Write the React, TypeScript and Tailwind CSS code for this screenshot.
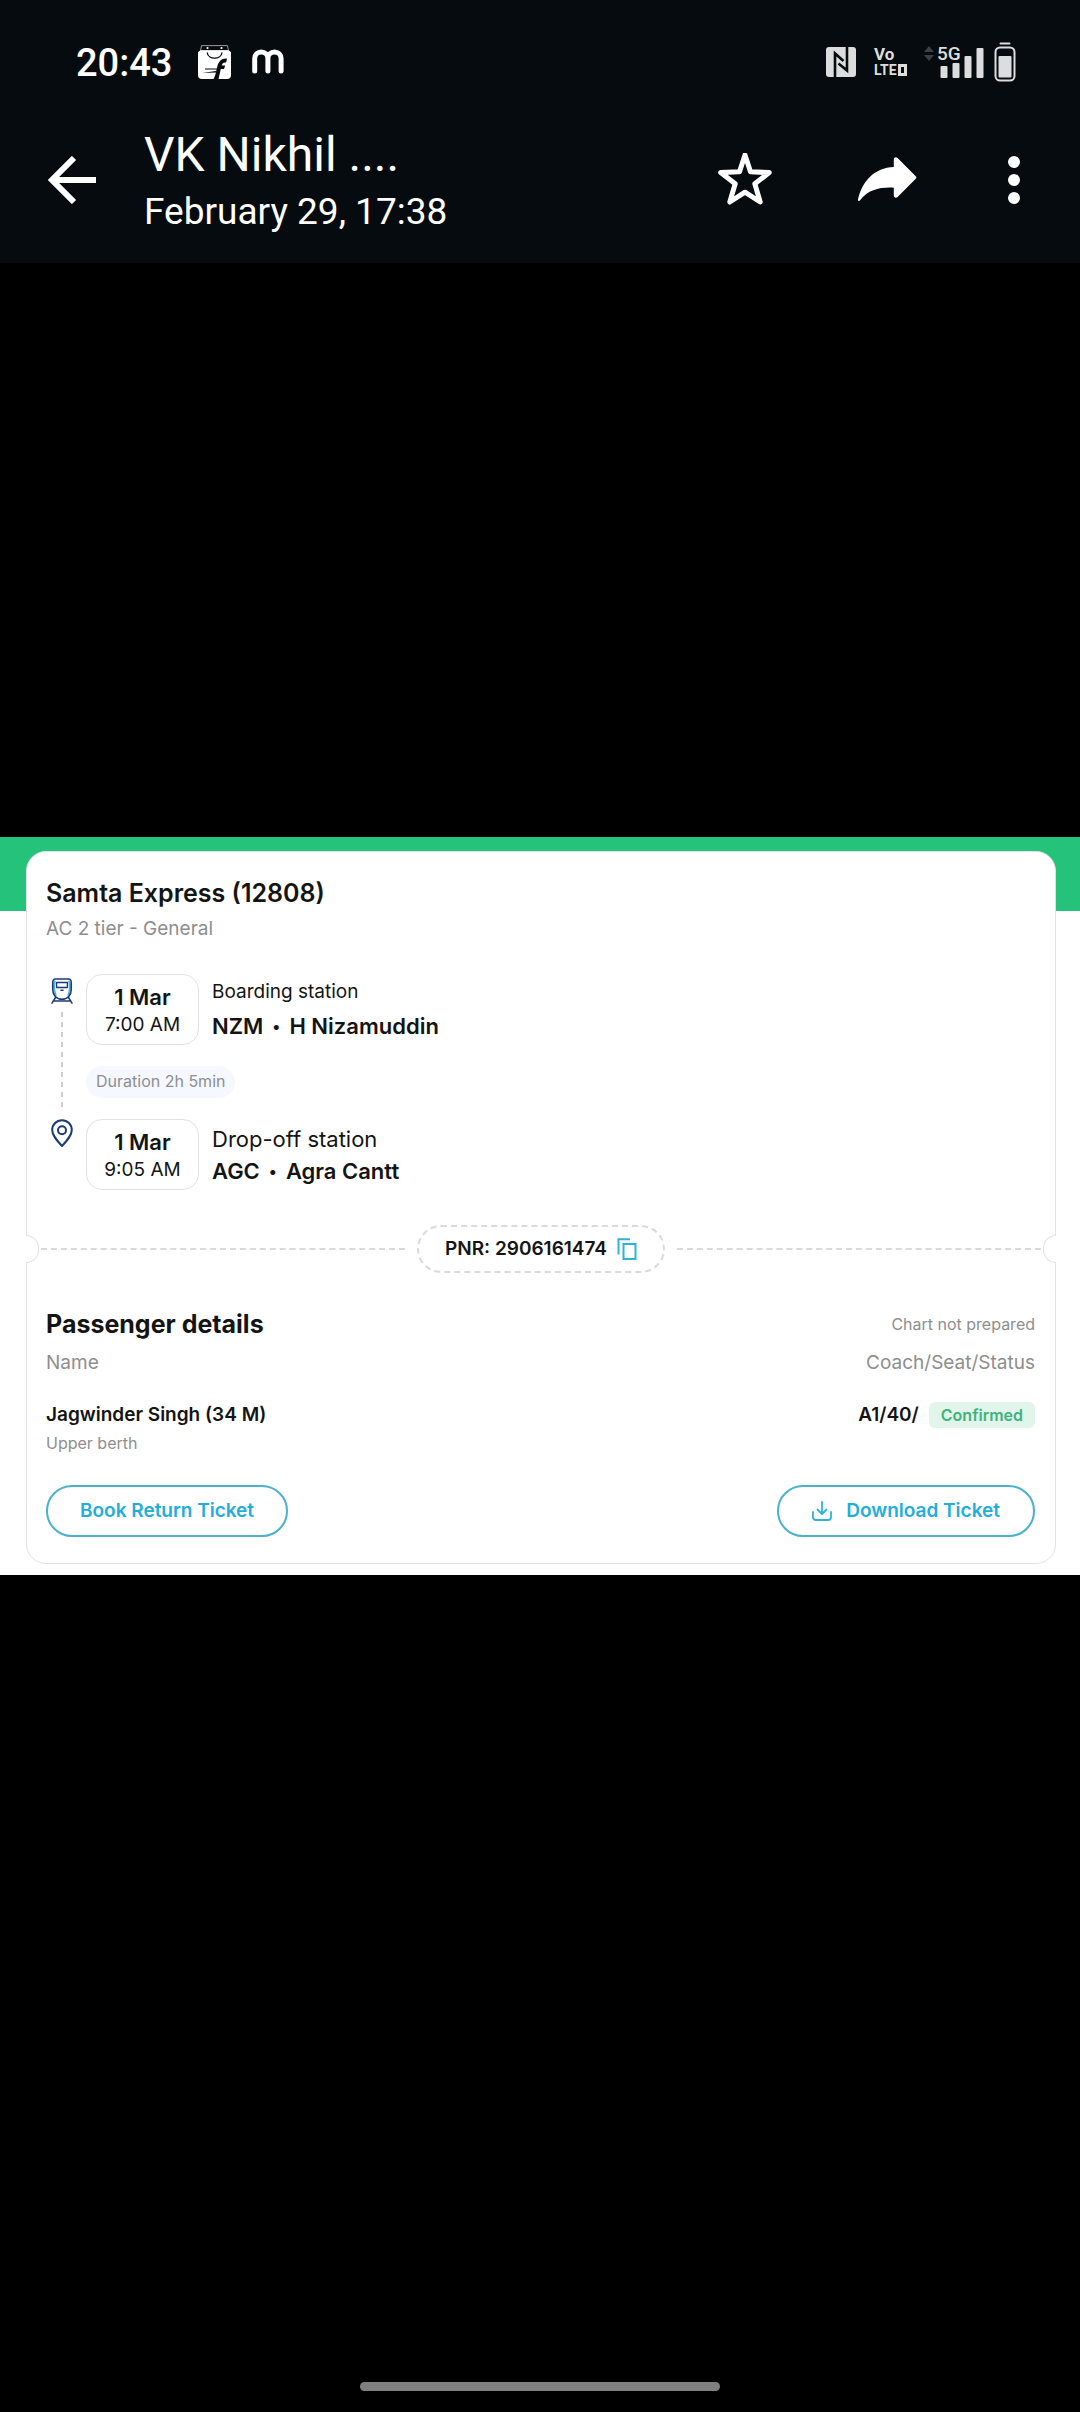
import React from 'react';

const PASSENGERS = [
  { name: 'Jagwinder Singh (34 M)', berth: 'Upper berth', seat: 'A1/40/', status: 'Confirmed' },
];

const BagIcon = () => (
  <svg className="w-[34px] h-[34px]" viewBox="0 0 34 34" fill="none">
    <path d="M3.500.6h26l1 5H2.500z" stroke="#9a9c9e" strokeWidth="1" />
    <path d="M0 7 2.500 5.300h28L33 7v23a4 4 0 0 1-4 4H4a4 4 0 0 1-4-4z" fill="#fff" />
    <circle cx="9.500" cy="3" r="1.100" fill="#fff" />
    <circle cx="23.500" cy="3" r="1.100" fill="#fff" />
    <path d="M9.200 7.500c.8 7.500 14 7.500 14.800 0" stroke="#060b0f" strokeWidth="1.400" />
    <path d="M15.500 34c1.800-3 2.300-6 3-9.500H7v-1h11.800l.5-2c1.200-5 4.200-8.500 9.700-8l-.8 4c-2.600-.5-3.800.5-4.400 3h3.400l-1.200 3.500h-3.200L20.500 34z" fill="#060b0f" />
    <path d="M4 28l14-.5v-1.500z" fill="#060b0f" />
  </svg>
);

const MIcon = () => (
  <svg className="w-8 h-[25px]" viewBox="0 0 32 25" fill="none" stroke="#fff" strokeWidth="5" strokeLinecap="round">
    <path d="M2.700 22V9.500a6.600 6.600 0 0 1 13.200 0V22M15.900 9.500a6.600 6.600 0 0 1 13.200 0V22" />
  </svg>
);

const NfcIcon = () => (
  <svg className="w-[30px] h-[30px]" viewBox="0 0 30 30" fill="none">
    <rect width="30" height="30" rx="3" fill="#dcdedd" />
    <path d="M9 30V6.500l8.500 7.500M21 0v23.500l-8.500-7" stroke="#060b0f" strokeWidth="2.600" />
  </svg>
);

const SignalIcon = () => (
  <svg className="w-[60px] h-8" viewBox="0 0 60 32">
    <path d="M5 0 10 6H0zM5 15l5-6H0z" fill="#3c4043" />
    <g fill="#dcdedd">
      <rect x="16.500" y="20" width="7" height="12" rx="1" />
      <rect x="28.500" y="17" width="7" height="15" rx="1" />
      <rect x="40.500" y="10" width="7" height="22" rx="1" />
      <rect x="52.500" y="2" width="7" height="30" rx="1" />
    </g>
  </svg>
);

const BatteryIcon = () => (
  <svg className="w-[22px] h-10" viewBox="0 0 22 40" fill="none">
    <rect x="5.500" y="0.500" width="11" height="2" rx="1" fill="#dcdedd" />
    <rect x="1.500" y="5.500" width="19" height="33" rx="4.500" stroke="#dcdedd" strokeWidth="2" />
    <rect x="4.500" y="14" width="13" height="21.500" rx="1" fill="#dcdedd" />
  </svg>
);

const BackIcon = () => (
  <svg className="w-12 h-12" viewBox="0 0 48 48" fill="none" stroke="#fff" strokeWidth="6">
    <path d="M48 24H5M26 2 4 24l22 22" />
  </svg>
);

const StarIcon = () => (
  <svg className="w-[54px] h-[54px]" viewBox="0 0 54 54" fill="none" stroke="#fff" strokeWidth="5" strokeLinejoin="round">
    <path d="M27 1.900 32.500 18.800l18.800.8-14.500 11.200L42.200 49 27 39.200 11.800 49l5.400-18.200L2.700 19.600l18.800-.8z" />
  </svg>
);

const ShareIcon = () => (
  <svg className="w-[60px] h-[46px]" viewBox="0 0 60 46" fill="#fff">
    <path d="M36.800 10V2.400c0-2.100 2.200-3 3.800-1.500L59 19.400c.6.600.6 1.400 0 2L40.600 40c-1.500 1.500-3.800.7-3.800-1.400v-7.900c-14-.6-25 1.700-34 12.700-.8 1.200-2.200.6-1.800-.8C5 24.200 17.500 10.700 36.800 10z" />
  </svg>
);

const MoreIcon = () => (
  <svg className="w-3 h-12" viewBox="0 0 12 48" fill="#fff">
    <circle cx="6" cy="6" r="6" />
    <circle cx="6" cy="24" r="6" />
    <circle cx="6" cy="42" r="6" />
  </svg>
);

const TrainIcon = () => (
  <svg className="w-[22px] h-[26px]" viewBox="0 0 22 26" fill="none" strokeLinecap="round" strokeLinejoin="round">
    <path d="M3.600 3.500c-.8 5-.8 10 1 13.200M18.400 3.500c.8 5 .8 10-1 13.200" stroke="#4cb4e6" strokeWidth="2.200" />
    <path d="M4.500 1h13c2 0 2.800 1.500 2.800 4v6.500c0 5.500-3.800 9.800-9.300 9.800s-9.300-4.300-9.300-9.800V5c0-2.500.8-4 2.800-4z" stroke="#1b3a72" strokeWidth="1.500" />
    <path d="M5.600 4.500h10.800v5H5.600z" stroke="#1b3a72" strokeWidth="1.300" />
    <path d="M10 12.200h2M4.500 19.500 1 25.200M17.500 19.500l3.500 5.700M3 23h16" stroke="#1b3a72" strokeWidth="1.500" />
  </svg>
);

const PinIcon = () => (
  <svg className="w-[22px] h-7" viewBox="0 0 22 28" fill="none" stroke="#1b3a72" strokeWidth="2" strokeLinejoin="round">
    <path d="M11 27C6 21.500 1.200 16.500 1.200 11a9.800 9.800 0 0 1 19.600 0c0 5.500-4.800 10.500-9.800 16z" />
    <circle cx="11" cy="11.200" r="4" />
  </svg>
);

const CopyIcon = () => (
  <svg className="w-5 h-[22px]" viewBox="0 0 20 22" fill="none" stroke="#2cb3d6" strokeWidth="2">
    <path d="M1.500 16.500V1.200H13M6.500 6h12v15h-12z" />
  </svg>
);

const DownloadIcon = () => (
  <svg className="w-5 h-5" viewBox="0 0 20 20" fill="none" stroke="#2cb3d6" strokeWidth="1.800" strokeLinecap="round" strokeLinejoin="round">
    <path d="M10 1v12M5.500 8.500 10 13l4.500-4.500M1 11v5a3 3 0 0 0 3 3h12a3 3 0 0 0 3-3v-5" />
  </svg>
);

const TimeBox: React.FC<{ date: string; time: string }> = ({ date, time }) => (
  <div className="w-[113px] shrink-0 rounded-2xl border border-[#e2e2e2] pt-2 pb-[5px] text-center">
    <p className="text-[22px] leading-7 font-semibold">{date}</p>
    <p className="text-[19px] leading-7">{time}</p>
  </div>
);

const Station: React.FC<{ code: string; name: string }> = ({ code, name }) => (
  <p className="flex items-center gap-[9px] text-[22px] leading-7 font-semibold">
    <span>{code}</span>
    <span className="text-[16px]">•</span>
    <span>{name}</span>
  </p>
);

const StatusBar = () => (
  <div className="flex h-[123px] items-center justify-between pl-[76px] pr-16 font-[Roboto,sans-serif]">
    <div className="flex items-center">
      <span className="pt-[2px] text-[38px] leading-10 font-medium text-white">20:43</span>
      <span className="ml-[26px] flex items-center gap-5">
        <BagIcon />
        <MIcon />
      </span>
    </div>
    <div className="flex items-center text-[#dcdedd]">
      <NfcIcon />
      <div className="ml-[18px] w-9 font-bold">
        <p className="text-[17px] leading-[17px]">Vo</p>
        <p className="flex items-center gap-px text-[14px] leading-[15px]">
          LTE
          <span className="h-[12px] w-[9px] shrink-0 border-[3px] border-[#dcdedd]" />
        </p>
      </div>
      <div className="relative ml-[14px]">
        <SignalIcon />
        <span className="absolute left-[13px] top-0 text-[19px] leading-4 font-medium">5G</span>
      </div>
      <div className="ml-[10px]">
        <BatteryIcon />
      </div>
    </div>
  </div>
);

const ViewerHeader = () => (
  <header className="h-[263px] bg-[#060b0f] text-white">
    <StatusBar />
    <div className="flex items-center pl-12 pr-[60px] font-[Roboto,sans-serif]">
      <button aria-label="Back">
        <BackIcon />
      </button>
      <div className="ml-12 flex-1">
        <h1 className="text-[48px] leading-[64px]">VK Nikhil ....</h1>
        <p className="text-[37px] leading-[50px]">February 29, 17:38</p>
      </div>
      <button aria-label="Star">
        <StarIcon />
      </button>
      <button aria-label="Forward" className="ml-[85px]">
        <ShareIcon />
      </button>
      <button aria-label="More options" className="ml-[91px]">
        <MoreIcon />
      </button>
    </div>
  </header>
);

const Journey = () => (
  <div className="mt-[31px] flex gap-2">
    <div className="flex w-8 flex-col items-center pt-1 pb-[43px]">
      <TrainIcon />
      <div className="my-2 w-[2px] flex-1 bg-[repeating-linear-gradient(#cfcfcf_0px_5px,transparent_5px_10px)]" />
      <PinIcon />
    </div>
    <div>
      <div className="flex gap-[13px]">
        <TimeBox date="1 Mar" time="7:00 AM" />
        <div className="pt-1">
          <p className="mb-[6px] text-[19px] leading-7">Boarding station</p>
          <Station code="NZM" name="H Nizamuddin" />
        </div>
      </div>
      <span className="my-[21px] flex h-8 w-fit items-center rounded-full bg-[#f5f8fe] px-[10px] pb-[2px] text-[16px] text-[#8e8e92]">
        Duration 2h 5min
      </span>
      <div className="flex gap-[13px]">
        <TimeBox date="1 Mar" time="9:05 AM" />
        <div className="pt-[6px]">
          <p className="mb-1 text-[22px] leading-7">Drop-off station</p>
          <Station code="AGC" name="Agra Cantt" />
        </div>
      </div>
    </div>
  </div>
);

const PnrRow = () => (
  <div className="-mx-px mt-[35px] flex items-center">
    <div className="h-7 w-[13px] rounded-r-full border border-l-0 border-[#e2e2e2] bg-white" />
    <div className="ml-[2px] mr-3 flex-1 border-t-2 border-dashed border-[#dadada]" />
    <div className="flex h-12 items-center gap-[10px] rounded-full border-2 border-dashed border-[#dadada] px-[26px]">
      <span className="text-[19px] leading-7 font-semibold">PNR: 2906161474</span>
      <button aria-label="Copy PNR">
        <CopyIcon />
      </button>
    </div>
    <div className="ml-3 mr-[2px] flex-1 border-t-2 border-dashed border-[#dadada]" />
    <div className="h-7 w-[13px] rounded-l-full border border-r-0 border-[#e2e2e2] bg-white" />
  </div>
);

const Passengers = () => (
  <div className="pt-[35px] pr-5 pl-[19px]">
    <div className="flex items-center justify-between">
      <h3 className="text-[25px] leading-8 font-bold">Passenger details</h3>
      <span className="text-[16px] text-[#8e8e8e]">Chart not prepared</span>
    </div>
    <table className="mt-[9px] w-full">
      <thead>
        <tr className="text-[19px] leading-7 text-[#8e8e8e]">
          <th className="p-0 text-left font-normal">Name</th>
          <th className="p-0 text-right font-normal">Coach/Seat/Status</th>
        </tr>
      </thead>
      <tbody>
        {PASSENGERS.map(p => (
          <tr key={p.name} className="align-top">
            <td className="p-0 pt-6">
              <p className="text-[19px] leading-7 font-semibold">{p.name}</p>
              <p className="mt-[2px] text-[16px] leading-6 text-[#8e8e8e]">{p.berth}</p>
            </td>
            <td className="p-0 pt-6">
              <div className="flex items-center justify-end gap-[10px]">
                <span className="text-[19px] leading-7 font-semibold">{p.seat}</span>
                <span className="rounded-md bg-[#e1f5ea] px-3 text-[16px] leading-[26px] font-semibold text-[#3db37d]">
                  {p.status}
                </span>
              </div>
            </td>
          </tr>
        ))}
      </tbody>
    </table>
  </div>
);

const TicketCard = () => (
  <section className="bg-[linear-gradient(#25c27b_74px,#ffffff_74px)] pt-[14px] pr-6 pb-[11px] pl-[26px] font-[Inter,sans-serif] text-[#141414]">
    <div className="rounded-[20px] border border-[#e2e2e2] bg-white pb-[26px]">
      <div className="px-[19px] pt-[25px]">
        <h2 className="text-[25px] leading-8 font-semibold">Samta Express (12808)</h2>
        <p className="mt-[6px] text-[19px] leading-7 text-[#8e8e8e]">AC 2 tier - General</p>
        <Journey />
      </div>
      <PnrRow />
      <Passengers />
      <div className="mt-[30px] flex justify-between pr-5 pl-[19px]">
        <button className="h-[52px] rounded-full border-2 border-[#4bb2cd] px-8 text-[19px] font-semibold text-[#22aedb]">
          Book Return Ticket
        </button>
        <button className="flex h-[52px] items-center gap-[14px] rounded-full border-2 border-[#4bb2cd] px-[33px] text-[19px] font-semibold text-[#22aedb]">
          <DownloadIcon />
          Download Ticket
        </button>
      </div>
    </div>
  </section>
);

const App: React.FC = () => {
  return (
    <div className="flex min-h-screen flex-col bg-black">
      <ViewerHeader />
      <main className="flex flex-1 flex-col justify-center">
        <TicketCard />
      </main>
      <footer className="flex h-[263px] items-end justify-center pb-[21px]">
        <div className="h-[9px] w-1/3 rounded-full bg-[#808080]" />
      </footer>
    </div>
  );
};

export default App;
